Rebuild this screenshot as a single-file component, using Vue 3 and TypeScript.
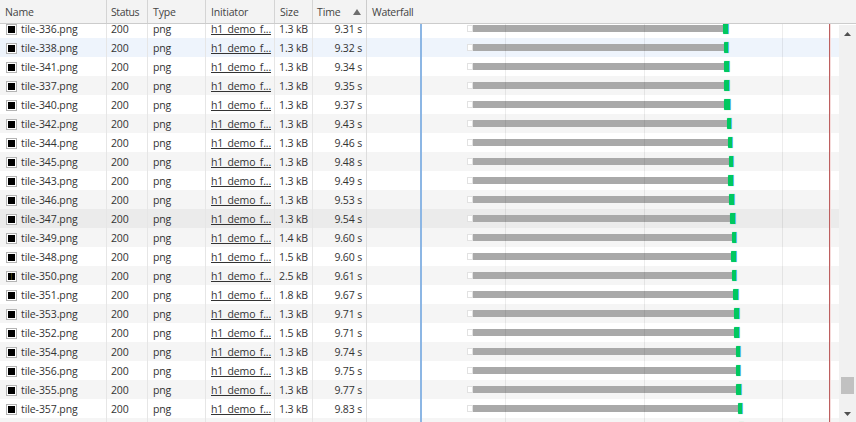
<script setup lang="ts">
interface Row {
  id: number
  size: string
  time: string
  barEnd: number
  greenEnd: number
  state?: string
}

const rows: Row[] = [
  { id: 336, size: '1.3 kB', time: '9.31 s', barEnd: 723, greenEnd: 728 },
  { id: 338, size: '1.3 kB', time: '9.32 s', barEnd: 724, greenEnd: 728, state: 'hover' },
  { id: 341, size: '1.3 kB', time: '9.34 s', barEnd: 724, greenEnd: 729 },
  { id: 337, size: '1.3 kB', time: '9.35 s', barEnd: 724, greenEnd: 729 },
  { id: 340, size: '1.3 kB', time: '9.37 s', barEnd: 724, greenEnd: 730 },
  { id: 342, size: '1.3 kB', time: '9.43 s', barEnd: 727, greenEnd: 731 },
  { id: 344, size: '1.3 kB', time: '9.46 s', barEnd: 728, greenEnd: 732 },
  { id: 345, size: '1.3 kB', time: '9.48 s', barEnd: 729, greenEnd: 733 },
  { id: 343, size: '1.3 kB', time: '9.49 s', barEnd: 728, greenEnd: 733 },
  { id: 346, size: '1.3 kB', time: '9.53 s', barEnd: 729, greenEnd: 734 },
  { id: 347, size: '1.3 kB', time: '9.54 s', barEnd: 730, greenEnd: 735, state: 'active' },
  { id: 349, size: '1.4 kB', time: '9.60 s', barEnd: 732, greenEnd: 736 },
  { id: 348, size: '1.5 kB', time: '9.60 s', barEnd: 731, greenEnd: 736 },
  { id: 350, size: '2.5 kB', time: '9.61 s', barEnd: 732, greenEnd: 736 },
  { id: 351, size: '1.8 kB', time: '9.67 s', barEnd: 733, greenEnd: 738 },
  { id: 353, size: '1.3 kB', time: '9.71 s', barEnd: 734, greenEnd: 739 },
  { id: 352, size: '1.5 kB', time: '9.71 s', barEnd: 734, greenEnd: 739 },
  { id: 354, size: '1.3 kB', time: '9.74 s', barEnd: 736, greenEnd: 740 },
  { id: 356, size: '1.3 kB', time: '9.75 s', barEnd: 736, greenEnd: 740 },
  { id: 355, size: '1.3 kB', time: '9.77 s', barEnd: 736, greenEnd: 741 },
  { id: 357, size: '1.3 kB', time: '9.83 s', barEnd: 738, greenEnd: 742 },
  { id: 358, size: '1.3 kB', time: '9.85 s', barEnd: 739, greenEnd: 743 },
]

const barStart = 473
const gridLines = [505, 644, 782]
</script>

<template>
  <div class="panel">
    <div class="head">
      <div class="hc name">Name</div>
      <div class="hc status">Status</div>
      <div class="hc type">Type</div>
      <div class="hc init">Initiator</div>
      <div class="hc size">Size</div>
      <div class="hc time">
        <span>Time</span>
        <svg class="sort" width="8" height="6" viewBox="0 0 8 6"><path d="M4 0 L8 6 L0 6 Z" fill="#6e6e6e" /></svg>
      </div>
      <div class="hc wf">Waterfall</div>
    </div>
    <div class="main">
      <div class="table">
        <div class="scrolled">
          <div
            v-for="(r, i) in rows"
            :key="r.id"
            class="row"
            :class="[i % 2 === 1 ? 'alt' : '', r.state]"
          >
            <div class="c name">
              <span class="thumb" :class="{ olive: r.id === 350 }"><i></i></span>
              <span class="fname">tile-{{ r.id }}.png</span>
            </div>
            <div class="c status">200</div>
            <div class="c type">png</div>
            <div class="c init"><span class="link">h1_demo_f...</span></div>
            <div class="c size num">{{ r.size }}</div>
            <div class="c time num">{{ r.time }}</div>
            <div class="c wf">
              <span class="wait"></span>
              <span class="bar" :style="{ width: r.barEnd - barStart + 'px' }"></span>
              <span class="dl" :style="{ width: r.greenEnd - r.barEnd + 'px' }"></span>
            </div>
          </div>
        </div>
        <span v-for="x in gridLines" :key="x" class="grid" :style="{ left: x + 'px' }"></span>
        <span class="dom"></span>
        <span class="load"></span>
      </div>
      <div class="sb">
        <div class="sb-btn">
          <svg width="7" height="4" viewBox="0 0 7 4"><path d="M3.5 0 L7 4 L0 4 Z" fill="#505050" /></svg>
        </div>
        <div class="track"><div class="knob"></div></div>
        <div class="sb-btn">
          <svg width="7" height="4" viewBox="0 0 7 4"><path d="M0 0 L7 0 L3.5 4 Z" fill="#505050" /></svg>
        </div>
      </div>
    </div>
  </div>
</template>

<style>
html, body { margin: 0; background: #fff; overflow: hidden; }
</style>

<style scoped>
.panel {
  width: 856px;
  height: 422px;
  display: flex;
  flex-direction: column;
  overflow: hidden;
  font-family: "Open Sans", "Noto Sans", sans-serif;
  font-size: 10.5px;
  letter-spacing: -0.15px;
  color: #333;
  background: #fff;
}
.head {
  height: 23px;
  flex: none;
  display: flex;
  background: #f3f3f3;
  border-bottom: 1px solid #ccc;
}
.hc {
  box-sizing: border-box;
  display: flex;
  align-items: center;
  padding-left: 5px;
  border-right: 1px solid #d4d4d4;
  color: #444;
  white-space: nowrap;
}
.hc.status { padding-left: 4px; letter-spacing: -0.4px; }
.name { width: 107px; }
.status { width: 41px; }
.type { width: 58px; }
.init { width: 69px; }
.size { width: 38px; }
.time { width: 54px; }
.wf { flex: 1; }
.hc.wf { border-right: 0; letter-spacing: -0.3px; padding-left: 5px; }
.hc.time { justify-content: space-between; padding-right: 5px; padding-left: 4px; border-right-color: #ccc; }
.sort { display: block; }
.main {
  flex: 1;
  min-height: 0;
  display: flex;
}
.table {
  position: relative;
  flex: 1;
  min-width: 0;
  overflow: hidden;
}
.scrolled { margin-top: -5px; }
.row {
  height: 19px;
  display: flex;
  background: #fff;
}
.row.alt { background: #f5f5f5; }
.row.hover { background: #eef4fc; }
.row.active { background: #ebebeb; }
.c {
  box-sizing: border-box;
  display: flex;
  align-items: center;
  padding-left: 4px;
  border-right: 1px solid #e6e6e6;
  white-space: nowrap;
  overflow: hidden;
}
.c.name { padding-left: 5px; }
.c.type { padding-left: 5px; }
.c.init { padding-left: 5px; }
.c.time { border-right-color: #ddd; }
.c.num { justify-content: flex-end; padding: 0 4px 0 0; }
.c.wf { padding-left: 100px; border-right: 0; }
.fname { letter-spacing: -0.08px; }
.thumb {
  box-sizing: border-box;
  flex: none;
  width: 11px;
  height: 11px;
  margin: 2px 4px 0 1px;
  padding: 1px;
  border: 1px solid #b4b4b4;
  background: #fff;
  display: flex;
}
.thumb i {
  display: block;
  flex: 1;
  background: #000;
}
.thumb.olive i {
  background: linear-gradient(90deg, #000 0 40%, #3a3a10 40% 60%, #000 60%);
}
.link { text-decoration: underline; }
.wait {
  box-sizing: border-box;
  flex: none;
  width: 6px;
  height: 7px;
  background: #fff;
  border: 1px solid #e2e2e2;
}
.bar {
  flex: none;
  height: 7px;
  background: #a9a9a9;
}
.dl {
  flex: none;
  height: 11px;
  background: #00c85f;
  border-right: 1px solid #4fc3f0;
  border-radius: 1px;
  box-shadow: 0 0 1px rgba(0, 200, 95, 0.6);
}
.grid {
  position: absolute;
  top: 0;
  bottom: 0;
  width: 1px;
  background: rgba(0, 0, 0, 0.07);
}
.dom {
  position: absolute;
  top: 0;
  bottom: 0;
  left: 420px;
  width: 2px;
  background: #8cb6e4;
}
.load {
  position: absolute;
  top: 0;
  bottom: 0;
  left: 829px;
  width: 1px;
  background: #bd5f5f;
  box-shadow: 1px 0 0 #f6dcdc;
}
.sb {
  flex: none;
  width: 17px;
  margin-top: 1px;
  background: #f1f1f1;
  display: flex;
  flex-direction: column;
}
.sb-btn {
  height: 17px;
  flex: none;
  display: flex;
  align-items: center;
  justify-content: center;
}
.track {
  flex: 1;
  min-height: 0;
  display: flex;
  flex-direction: column;
  justify-content: flex-end;
  align-items: center;
  padding-bottom: 11px;
}
.knob {
  width: 13px;
  height: 17px;
  background: #c1c1c1;
}
</style>
